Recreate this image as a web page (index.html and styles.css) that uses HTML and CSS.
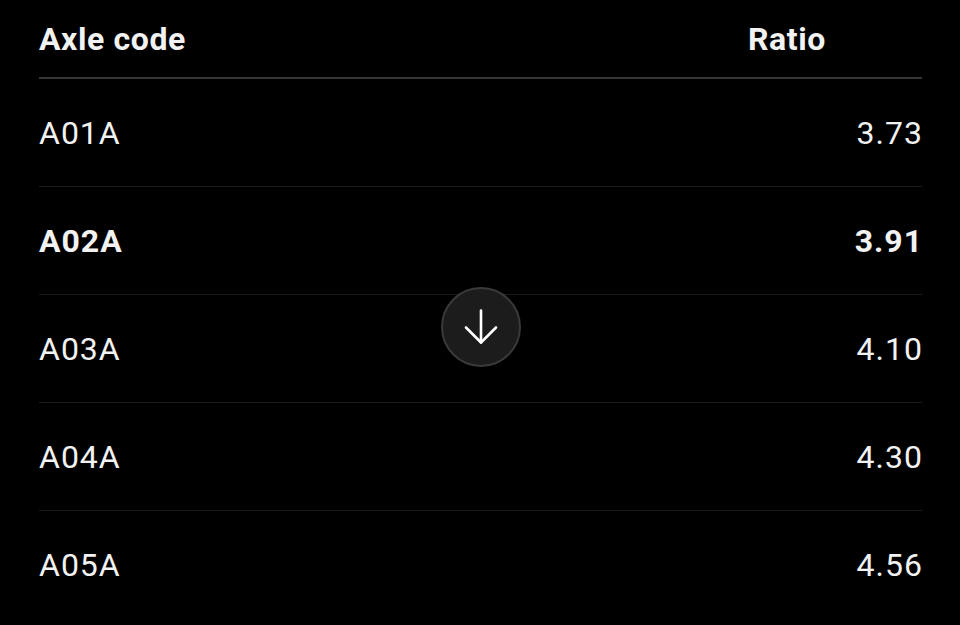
FILE: index.html
```html
<!DOCTYPE html>
<html lang="en">
<head>
    <meta charset="UTF-8">
    <meta name="viewport" content="width=device-width, initial-scale=1.0">
    <title>Axle ratios</title>
    <link rel="stylesheet" href="styles.css">
</head>
<body>
    <div class="ratio-table">
        <div class="head-row">
            <span class="col-code">Axle code</span>
            <span class="col-ratio">Ratio</span>
        </div>
        <div class="row"><span>A01A</span><span>3.73</span></div>
        <div class="row selected"><span>A02A</span><span>3.91</span></div>
        <div class="row"><span>A03A</span><span>4.10</span></div>
        <div class="row"><span>A04A</span><span>4.30</span></div>
        <div class="row"><span>A05A</span><span>4.56</span></div>
    </div>

    <!-- scroll down button -->
    <button class="scroll-btn" aria-label="Scroll down">
        <svg width="36" height="36" viewBox="0 0 36 36" fill="none" stroke="#fff" stroke-width="2.6" stroke-linecap="round" stroke-linejoin="round">
            <path d="M18 1.5 V33.5"/>
            <path d="M3 18.5 L18 33.5 L33 18.5"/>
        </svg>
    </button>
</body>
</html>
```

FILE: styles.css
```css
html, body {
    background: #000;
}

body {
    margin: 0;
    padding: 0 38px 0 39px;
    font-family: Roboto, "Liberation Sans", sans-serif;
    color: #f2f2f2;
    height: 625px;
    overflow: hidden;
}

.head-row {
    display: flex;
    justify-content: space-between;
    align-items: center;
    height: 77px;
    border-bottom: 2px solid #353535;
    font-size: 32px;
    font-weight: bold;
    letter-spacing: 0.6px;
}

.head-row .col-ratio {
    padding-right: 96px;
}

.row {
    display: flex;
    justify-content: space-between;
    align-items: center;
    height: 107px;
    border-bottom: 1px solid #1c1c1c;
    font-size: 32px;
    letter-spacing: 1px;
}

.row:last-child {
    border-bottom: none;
}

.row span:last-child {
    margin-right: -1px;
}

.row.selected {
    font-weight: bold;
}

.scroll-btn {
    position: absolute;
    left: 441px;
    top: 287px;
    width: 80px;
    height: 80px;
    border-radius: 50%;
    background: #1c1c1c;
    border: 2px solid #3a3a3a;
    display: flex;
    align-items: center;
    justify-content: center;
    padding: 0;
    cursor: pointer;
}
```
